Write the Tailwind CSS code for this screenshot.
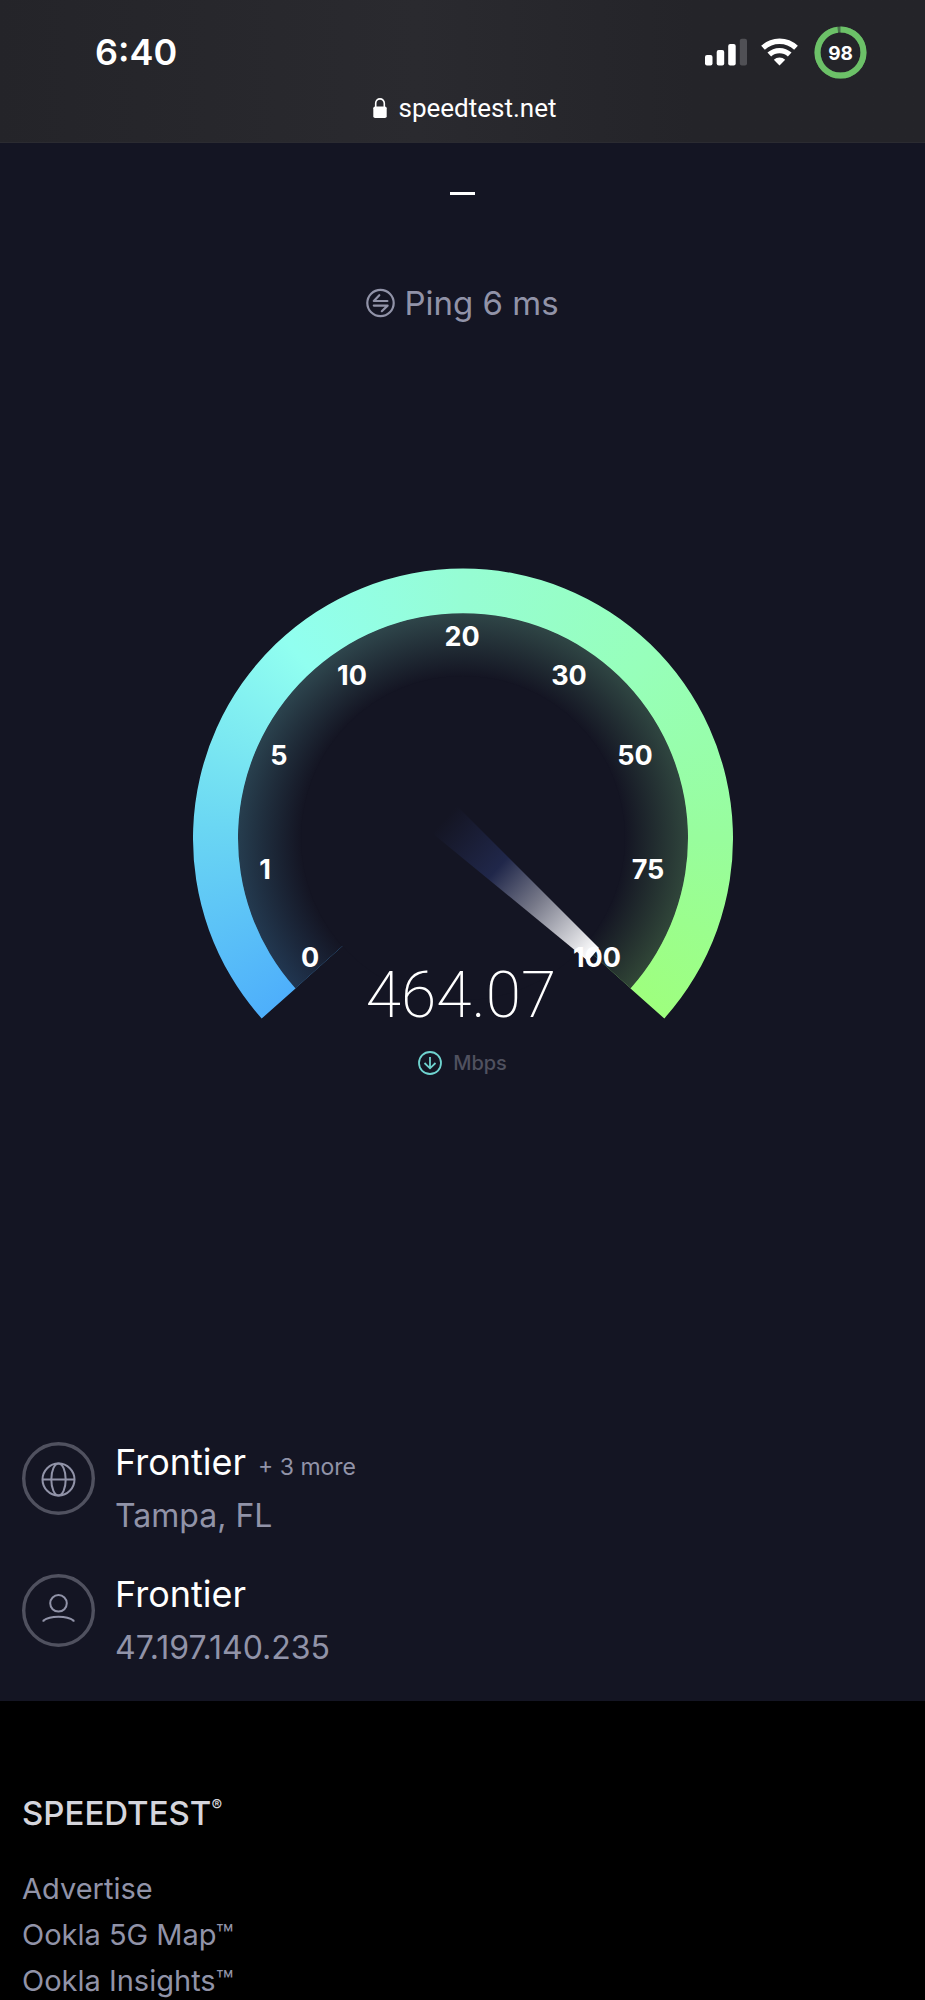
<!DOCTYPE html>
<html lang="en">
<head>
<meta charset="utf-8">
<meta name="viewport" content="width=device-width, initial-scale=1">
<title>Speedtest</title>
<script src="https://cdn.jsdelivr.net/npm/@tailwindcss/browser@4"></script>
</head>
<body class="bg-black font-['Inter',sans-serif] text-white">
<header class="border-b border-[#2b2b31] bg-linear-to-r from-[#242429] via-[#2a2a2f] via-45% to-[#242429] to-75% pt-[22px] pb-4">
  <div class="flex h-[60px] items-center justify-between pr-[58px] pl-[95px]">
    <time class="text-[36px] leading-none font-semibold">6:40</time>
    <div class="flex items-center">
      <svg class="h-[28px] w-[42px]" viewBox="0 0 42 28" fill="#fff" role="img" aria-label="Signal">
        <rect x="0" y="17" width="7.5" height="10.5" rx="2"/><rect x="11.7" y="12" width="7.5" height="15.5" rx="2"/><rect x="23.2" y="6" width="7.5" height="21.5" rx="2"/><rect x="34.8" y="0.7" width="7.2" height="26.8" rx="2" fill="#505055"/>
      </svg>
      <svg class="ml-[14px] h-[28px] w-[37px]" viewBox="0 0 37 28" role="img" aria-label="Wi-Fi">
        <g fill="none" stroke="#fff" stroke-width="5.4"><path d="M2 9.8A24 24 0 0 1 35 9.8"/><path d="M8.3 16.6A15 15 0 0 1 28.7 16.6"/></g>
        <path d="M18.5 27.5L12.8 21.8A8.2 8.2 0 0 1 24.2 21.8Z" fill="#fff"/>
      </svg>
      <svg class="ml-4 h-[53px] w-[53px]" viewBox="0 0 53 53" role="img" aria-label="Battery 98 percent">
        <circle cx="26.5" cy="26.5" r="23" fill="none" stroke="#47704a" stroke-width="6"/>
        <circle cx="26.5" cy="26.5" r="23" fill="none" stroke="#6cc168" stroke-width="6" pathLength="100" stroke-dasharray="98 2" transform="rotate(-90 26.5 26.5)"/>
        <text x="26.5" y="33.5" text-anchor="middle" fill="#fff" font-size="19" font-weight="700">98</text>
      </svg>
    </div>
  </div>
  <div class="mt-2 flex items-center justify-center gap-3 pl-1 leading-9">
    <svg class="h-[20px] w-[14px]" viewBox="0 0 14 20" aria-hidden="true"><rect x="0.3" y="8.5" width="13.4" height="11.5" rx="1.8" fill="#fff"/><path d="M2.7 9V5.2a4.3 4.3 0 0 1 8.6 0V9" fill="none" stroke="#fff" stroke-width="1.6"/></svg>
    <span class="font-['Roboto',sans-serif] text-[26px]">speedtest.net</span>
  </div>
</header>

<main class="flex flex-col bg-[#141523] pt-[49px] pb-[27px]">
  <div class="h-[3px] w-[25px] self-center bg-white"></div>
  <p class="mt-[88px] flex items-center justify-center gap-[9px] text-[33px] leading-10 text-[#9193a8]">
    <svg class="h-[30px] w-[29px]" viewBox="0 0 29 30" fill="none" stroke="#9193a8" stroke-width="2.2" aria-hidden="true"><circle cx="14.5" cy="15" r="13.2"/><path d="M21.4 13H7.8L13.3 7.2M7.8 17.6H21.6L15.8 23.2" stroke-linejoin="round" stroke-linecap="round"/></svg>
    Ping 6 ms
  </p>

  <svg class="mt-[245px] h-auto w-[542px] max-w-full self-center overflow-visible" viewBox="0 0 542 472" role="img" aria-label="Download speed gauge, 464.07 Mbps">
    <defs>
      <clipPath id="arc"><path d="M69.7 450.5A270 270 0 1 1 472.3 450.5L438.5 420.4A225 225 0 1 0 103.5 420.4Z"/></clipPath>
      <clipPath id="dial"><path d="M103.2 420.4A225.4 225.4 0 1 1 438.8 420.4L388.7 375.5A158 158 0 1 0 153.3 375.5Z"/></clipPath>
      <linearGradient id="needle" gradientUnits="userSpaceOnUse" x1="252" y1="252" x2="401" y2="386">
        <stop offset="0" stop-color="#20274a" stop-opacity="0"/><stop offset="0.36" stop-color="#20274a"/><stop offset="0.62" stop-color="#777989"/><stop offset="1" stop-color="#fff"/>
      </linearGradient>
    </defs>
    <g clip-path="url(#dial)">
      <foreignObject x="0" y="0" width="542" height="542"><div class="h-[542px] w-[542px] bg-[radial-gradient(circle_at_271px_270px,#141523_162px,#141523ee_182px,#141523c8_227px),conic-gradient(from_180deg_at_271px_270px,#4eaffb_48deg,#6ad6f3_92deg,#91fff0_138deg,#96fdd4_180deg,#97ffbb_225deg,#98fd9d_270deg,#9eff7e_312deg)]"></div></foreignObject>
    </g>
    <circle cx="271" cy="270" r="162" fill="#141523"/>
    <g clip-path="url(#arc)">
      <foreignObject x="0" y="0" width="542" height="542"><div class="h-[542px] w-[542px] bg-[conic-gradient(from_180deg_at_271px_270px,#4eaffb_48deg,#6ad6f3_92deg,#91fff0_138deg,#96fdd4_180deg,#97ffbb_225deg,#98fd9d_270deg,#9eff7e_312deg)]"></div></foreignObject>
    </g>
    <path d="M240 265L265 238L407 380L396 393Z" fill="url(#needle)"/>
    <g fill="#fff" font-size="27" font-weight="700" text-anchor="middle">
      <text x="118" y="399">0</text><text x="73" y="311">1</text><text x="87" y="197">5</text><text x="160" y="117">10</text><text x="270" y="78">20</text><text x="377" y="117">30</text><text x="443" y="197">50</text><text x="456" y="311">75</text><text x="405" y="399">100</text>
    </g>
    <text x="269" y="449" text-anchor="middle" fill="#fff" font-size="64" class="font-['Roboto',sans-serif] font-extralight">464.07</text>
  </svg>

  <p class="mt-2 flex items-center justify-center gap-[11px] text-[20px] leading-[30px] font-medium text-[#50515f]">
    <svg class="h-6 w-6" viewBox="0 0 24 24" fill="none" stroke="#6fd3cf" stroke-width="1.8" aria-hidden="true"><circle cx="12" cy="12" r="11"/><path d="M12 6V17M6.5 12L12 17.3L17.5 12"/></svg>
    Mbps
  </p>

  <ul class="mt-[358px] flex flex-col gap-[26px] px-[22px]">
    <li class="flex gap-5">
      <svg class="mt-[6px] h-[73px] w-[73px] shrink-0" viewBox="0 0 73 73" fill="none" stroke="#9193a8" stroke-width="2" aria-hidden="true"><circle cx="36.5" cy="36.5" r="34.8" stroke="#50515f" stroke-width="3.4"/><circle cx="36.5" cy="37.5" r="16"/><ellipse cx="36.5" cy="37.5" rx="7.2" ry="16"/><path d="M20.5 37.5H52.5"/></svg>
      <div class="flex flex-col gap-[2px] leading-[52px]">
        <p class="flex h-[52px] items-baseline gap-3 text-[36px]">Frontier <a href="#" class="text-[23px] text-[#9193a8]">+ 3 more</a></p>
        <p class="text-[32px] text-[#9193a8]">Tampa, FL</p>
      </div>
    </li>
    <li class="flex gap-5">
      <svg class="mt-[6px] h-[73px] w-[73px] shrink-0" viewBox="0 0 73 73" fill="none" stroke="#9193a8" stroke-width="2" aria-hidden="true"><circle cx="36.5" cy="36.5" r="34.8" stroke="#50515f" stroke-width="3.4"/><circle cx="36.5" cy="29.3" r="8.3"/><path d="M21.5 47.8V46.5C28 41.5 45 41.5 51.5 46.5V47.8"/></svg>
      <div class="flex flex-col gap-[2px] leading-[52px]">
        <p class="text-[36px]">Frontier</p>
        <p class="text-[32px] text-[#9193a8]">47.197.140.235</p>
      </div>
    </li>
  </ul>
</main>

<footer class="px-[22px] pt-[92px]">
  <h2 class="flex text-[33px] leading-10 font-medium text-[#d5d5dc]">SPEEDTEST<span class="text-[16px] leading-6">®</span></h2>
  <nav class="mt-[37px] flex flex-col items-start gap-2 text-[29px] leading-[38px] text-[#9193a8]">
    <a href="#">Advertise</a>
    <a href="#">Ookla 5G Map™</a>
    <a href="#">Ookla Insights™</a>
  </nav>
</footer>
</body>
</html>
